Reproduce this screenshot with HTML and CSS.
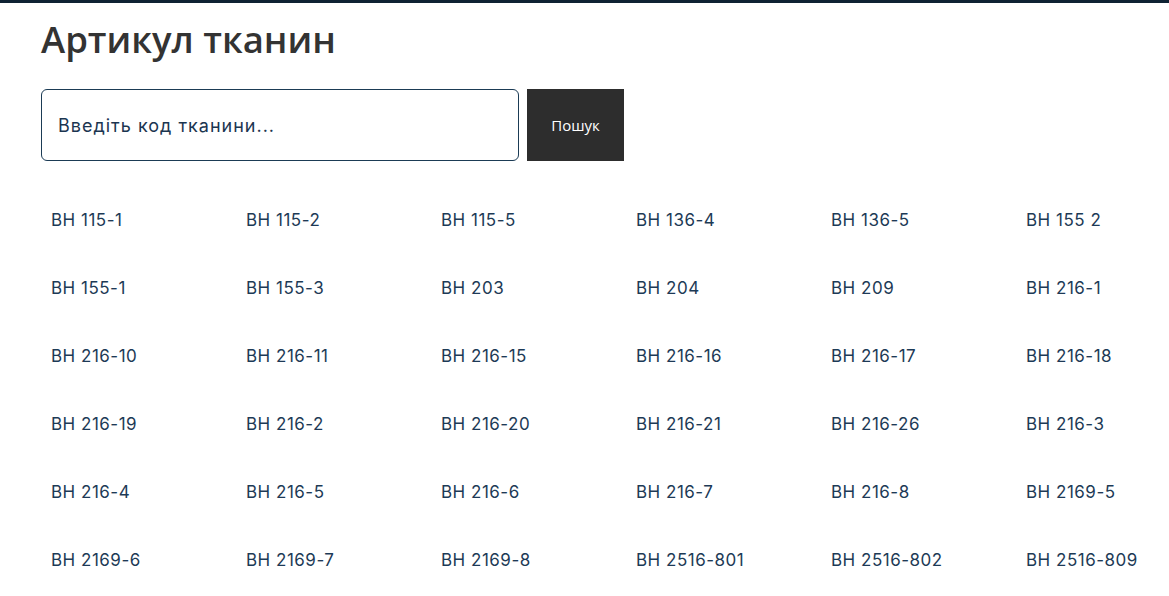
FILE: index.html
```html
<!DOCTYPE html>
<html lang="uk">
<head>
<meta charset="utf-8">
<link rel="stylesheet" href="styles.css">
</head>
<body>
<div class="topbar"></div>
<main class="page">
  <h1 class="title">Артикул тканин</h1>
  <form class="search">
    <input class="search-input" type="text" placeholder="Введіть код тканини...">
    <button class="search-btn" type="button">Пошук</button>
  </form>
  <ul class="codes">
    <li>BH 115-1</li><li>BH 115-2</li><li>BH 115-5</li><li>BH 136-4</li><li>BH 136-5</li><li>BH 155 2</li>
    <li>BH 155-1</li><li>BH 155-3</li><li>BH 203</li><li>BH 204</li><li>BH 209</li><li>BH 216-1</li>
    <li>BH 216-10</li><li>BH 216-11</li><li>BH 216-15</li><li>BH 216-16</li><li>BH 216-17</li><li>BH 216-18</li>
    <li>BH 216-19</li><li>BH 216-2</li><li>BH 216-20</li><li>BH 216-21</li><li>BH 216-26</li><li>BH 216-3</li>
    <li>BH 216-4</li><li>BH 216-5</li><li>BH 216-6</li><li>BH 216-7</li><li>BH 216-8</li><li>BH 2169-5</li>
    <li>BH 2169-6</li><li>BH 2169-7</li><li>BH 2169-8</li><li>BH 2516-801</li><li>BH 2516-802</li><li>BH 2516-809</li>
  </ul>
</main>
</body>
</html>
```

FILE: styles.css
```css
html, body {
  margin: 0;
  padding: 0;
  overflow: hidden;
  background: #fff;
}
body {
  font-family: "Open Sans", "Noto Sans", sans-serif;
}
.topbar {
  height: 3px;
  background: #0e2233;
}
.page {
  padding: 0 0 0 41px;
}
.title {
  margin: 14px 0 0;
  font-family: "Open Sans", sans-serif;
  font-weight: 600;
  font-size: 36.5px;
  line-height: 44px;
  color: #333333;
}
.search {
  display: flex;
  gap: 8px;
  margin-top: 28px;
  height: 72px;
}
.search-input {
  box-sizing: border-box;
  width: 478px;
  height: 72px;
  border: 1px solid #1b3b55;
  border-radius: 6px;
  padding: 0 16px;
  font-family: "Inter", sans-serif;
  font-size: 18px;
  letter-spacing: 1px;
  color: #1b3550;
  outline: none;
}
.search-input::placeholder {
  color: #1b3550;
  opacity: 1;
}
.search-btn {
  width: 97px;
  height: 72px;
  border: 0;
  background: #2d2d2d;
  color: #fff;
  font-family: "Open Sans", sans-serif;
  font-size: 15px;
  padding: 0;
}
.codes {
  list-style: none;
  margin: 27px 0 0;
  padding: 0;
  display: grid;
  grid-template-columns: repeat(6, 195px);
  grid-auto-rows: 68px;
  width: 1170px;
}
.codes li {
  padding: 20px 10px 0;
  font-family: "Inter", sans-serif;
  font-size: 17px;
  letter-spacing: 0.5px;
  line-height: 24px;
  color: #1d3a56;
  white-space: nowrap;
}
```
